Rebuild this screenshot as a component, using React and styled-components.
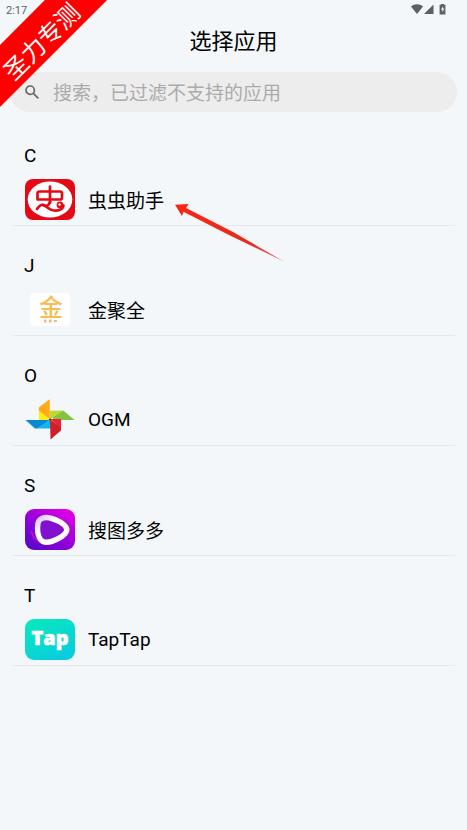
import React from 'react';
import styled, { createGlobalStyle } from 'styled-components';

const apps = [
    { letter: 'C', name: '虫虫助手', Icon: ChongIcon, marked: true },
    { letter: 'J', name: '金聚全', Icon: JinIcon },
    { letter: 'O', name: 'OGM', Icon: PinwheelIcon },
    { letter: 'S', name: '搜图多多', Icon: SoutuIcon },
    { letter: 'T', name: 'TapTap', Icon: TapIcon },
];

function App() {
    return (
        <Page>
            <GlobalStyle />
            <StatusBar>
                <span>2:17</span>
                <StatusIcons />
            </StatusBar>
            <Title>选择应用</Title>
            <SearchBar>
                <SearchIcon />
                <SearchInput type="search" aria-label="搜索" placeholder="搜索，已过滤不支持的应用" />
            </SearchBar>
            <AppList>
                {apps.map(({ letter, name, Icon, marked }) => (
                    <Section key={letter}>
                        <Letter>{letter}</Letter>
                        <AppRow type="button">
                            <Icon />
                            <span>{name}</span>
                            {marked && <Arrow />}
                        </AppRow>
                    </Section>
                ))}
            </AppList>
            <Ribbon>圣力专测</Ribbon>
        </Page>
    )
}

export default App

function StatusIcons() {
    return (
        <svg width="36" height="12" viewBox="0 0 36 12" fill="#5d5f61" aria-hidden="true">
            <path d="M0 2.600C3.400-.400 8.600-.400 12 2.600L6 10z" />
            <path d="M22.500.500V10H13z" />
            <path d="M28.600.800h1.500V0h2.800v.800h1.500V10.400h-5.800z" />
            <path d="M32 2.200l-2 3.500h1.400v2.500l2-3.600h-1.400z" fill="#f3f7fa" />
        </svg>
    )
}

function SearchIcon() {
    return (
        <svg width="14" height="14" viewBox="0 0 14 14" fill="none" stroke="#676767" strokeWidth="1.7" aria-hidden="true">
            <circle cx="5.2" cy="5.2" r="4.2" />
            <path d="M8.300 8.300l5 5" />
        </svg>
    )
}

function Arrow() {
    return (
        <ArrowSvg width="110" height="58" viewBox="0 0 110 58" aria-hidden="true">
            <defs>
                <linearGradient id="arrowFade" x1="0" y1="0" x2="1" y2="1">
                    <stop offset="0" stopColor="#fb2413" />
                    <stop offset="0.7" stopColor="#e92a1d" />
                    <stop offset="1" stopColor="#e0705f" />
                </linearGradient>
            </defs>
            <path d="M0 .700L13.500 0 11 4 58 28 109 57.500 54 31 8.500 7.800 7 12z" fill="url(#arrowFade)" />
        </ArrowSvg>
    )
}

function ChongIcon() {
    return (
        <svg width="50" height="41" viewBox="0 0 50 41" aria-hidden="true">
            <rect width="50" height="41" rx="8" fill="#e50914" />
            <ellipse cx="25" cy="20.5" rx="22.3" ry="18" fill="#fff" />
            <g fill="none" stroke="#e50914" strokeWidth="2.7" strokeLinecap="round" strokeLinejoin="round">
                <path d="M25 7.500v16" />
                <path d="M12.500 20.500v-6q0-2 2-2h20.500q2 0 2 2v4q0 2-2 2H12.500" />
                <path d="M25 23c-1 3-3 4.500-5 3.500-4-2-6 .500-8 3.500" />
                <path d="M18 26c4 1 6 5.500 11 5.500 5 .300 9-1.500 9.500-5" />
            </g>
            <circle cx="35" cy="26" r="3.4" fill="#e50914" />
            <circle cx="34.5" cy="25.5" r="1.2" fill="#fff" />
        </svg>
    )
}

function JinIcon() {
    return (
        <svg width="50" height="41" viewBox="0 0 50 41" aria-hidden="true">
            <rect x="5" y="4" width="40" height="33" rx="4" fill="#fff" />
            <JinText x="26" y="27">金</JinText>
            <path d="M19 30.500h2.500v3H19zM24 30.500h2.500v3H24zM29 31h3v2h-3z" fill="#eaa765" opacity=".8" />
        </svg>
    )
}

function PinwheelIcon() {
    return (
        <svg width="50" height="41" viewBox="0 0 50 41" aria-hidden="true">
            <path d="M24.800.300V20.500L13.800 12V8.500z" fill="#ffaa18" />
            <path d="M13.800 11.500L24.800 20.500V21.500H14z" fill="#ffed12" />
            <path d="M24.800 12L38.500 11.700 49.500 21H29z" fill="#82c341" />
            <path d="M24.800 11.800H38L25 20.500z" fill="#c1d92f" />
            <path d="M.500 21H25L12.500 29.500H10z" fill="#0789d5" />
            <path d="M25 21L12 29.500H26V21z" fill="#10b5ec" />
            <path d="M25 20.500L36 28V31.500L25.500 40.500z" fill="#ce2028" />
            <path d="M25 20H36V29z" fill="#e92332" />
            <circle cx="25" cy="20.5" r="1" fill="#27313a" />
        </svg>
    )
}

function SoutuIcon() {
    return (
        <svg width="50" height="41" viewBox="0 0 50 41" aria-hidden="true">
            <defs>
                <linearGradient id="soutuBg" x1="1" y1="0" x2="0.2" y2="1">
                    <stop offset="0" stopColor="#f000e6" />
                    <stop offset="0.5" stopColor="#a000dc" />
                    <stop offset="1" stopColor="#5a08c8" />
                </linearGradient>
                <linearGradient id="soutuRing" x1="0" y1="0" x2="1" y2="1">
                    <stop offset="0" stopColor="#d9c4ff" />
                    <stop offset="0.35" stopColor="#fff" />
                    <stop offset="0.8" stopColor="#fff" />
                    <stop offset="1" stopColor="#e9b5f5" />
                </linearGradient>
            </defs>
            <rect width="50" height="41" rx="9" fill="url(#soutuBg)" />
            <ellipse cx="23" cy="21" rx="16" ry="13" fill="#7b0be0" transform="rotate(25 23 21)" />
            <path d="M6.500 22c1 8 9 13 19 13" fill="none" stroke="#d509df" strokeWidth="1.5" />
            <path d="M36 10c6 5 5 17-4 22" fill="none" stroke="#bd16ea" strokeWidth="2" />
            <path d="M13 14C14 9.500 19 7.500 25 9 32 10.500 39.500 15 41.500 19c1.500 3.500-2.500 8-9 11-7 3.500-14 4.500-17 0.500-2.500-3.500-3.500-10-2.500-16.500z" fill="#8211cf" stroke="url(#soutuRing)" strokeWidth="5.4" />
        </svg>
    )
}

function TapIcon() {
    return (
        <svg width="50" height="41" viewBox="0 0 50 41" aria-hidden="true">
            <defs>
                <linearGradient id="tapBg" x1="0.2" y1="0" x2="0.8" y2="1">
                    <stop offset="0" stopColor="#07e8bd" />
                    <stop offset="1" stopColor="#0acbe0" />
                </linearGradient>
            </defs>
            <rect width="50" height="41" rx="9" fill="url(#tapBg)" />
            <TapText x="25" y="26">Tap</TapText>
        </svg>
    )
}

const GlobalStyle = createGlobalStyle`
    * {
        box-sizing: border-box;
    }

    body {
        margin: 0;
        background: #f3f7fa;
        color: #000;
        font-family: Roboto, "Noto Sans CJK SC", sans-serif;
    }
`

const Page = styled.div`
    position: relative;
    min-height: 100vh;
    overflow: hidden;
`

const StatusBar = styled.div`
    display: flex;
    align-items: center;
    justify-content: space-between;
    height: 20px;
    padding: 0 20px 0 6px;
    color: #5d5f61;
    font-size: 11px;
`

const Title = styled.h1`
    margin: 0;
    padding: 6px 0 14px;
    font-size: 22px;
    line-height: 32px;
    font-weight: 400;
    text-align: center;
`

const SearchBar = styled.label`
    display: flex;
    align-items: center;
    gap: 14px;
    height: 40px;
    margin: 0 10px;
    padding: 0 15px;
    border-radius: 20px;
    background: #ededed;
`

const SearchInput = styled.input`
    flex: 1;
    min-width: 0;
    height: 40px;
    padding: 2px 0 0;
    border: 0;
    outline: 0;
    background: none;
    font-family: inherit;
    font-size: 19px;

    &::placeholder {
        color: #ababab;
        opacity: 1;
    }
`

const AppList = styled.main`
    padding-top: 4px;
`

const Section = styled.section`
    margin: 0 12px;
    padding-top: 28px;
    border-bottom: 1px solid #e5e9ec;
`

const Letter = styled.h2`
    margin: 0;
    padding: 0 12px 5px;
    font-size: 19px;
    line-height: 24px;
    font-weight: 400;
`

const AppRow = styled.button`
    position: relative;
    display: flex;
    align-items: center;
    gap: 13px;
    width: 100%;
    height: 52px;
    padding: 0 13px;
    border: 0;
    background: none;
    color: inherit;
    font-family: inherit;
    font-size: 19px;
    text-align: left;
    cursor: pointer;
`

const ArrowSvg = styled.svg`
    position: absolute;
    top: 31px;
    left: 163px;
    pointer-events: none;
`

const JinText = styled.text`
    fill: #f4bd55;
    font-family: "Noto Sans CJK SC", sans-serif;
    font-size: 24px;
    font-weight: 500;
    text-anchor: middle;
`

const TapText = styled.text`
    fill: #fff;
    stroke: #fff;
    stroke-width: 0.6px;
    font-family: "Open Sans", Lato, sans-serif;
    font-size: 20px;
    font-weight: 800;
    text-anchor: middle;
`

const Ribbon = styled.div`
    position: absolute;
    top: 16px;
    left: -62px;
    width: 200px;
    height: 44px;
    padding-top: 12px;
    background: #fe0000;
    color: #fff;
    font-size: 24px;
    line-height: 32px;
    text-align: center;
    transform: rotate(-45deg);
`
